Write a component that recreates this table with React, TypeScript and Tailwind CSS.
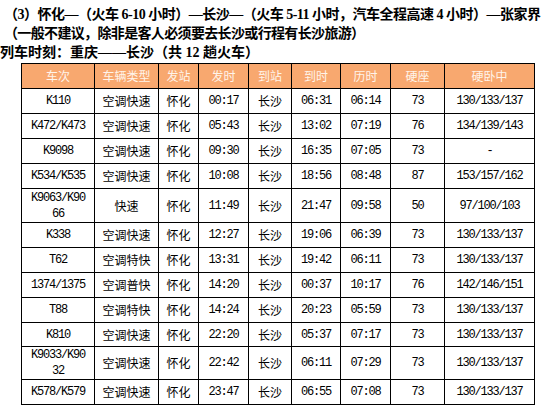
import React from "react";

type Row = {
  no: string[];
  type: string;
  from: string;
  dep: string;
  to: string;
  arr: string;
  dur: string;
  seat: string;
  sleeper: string;
  h?: string;
};

const rows: Row[] = [
  { no: ["K110"], type: "空调快速", from: "怀化", dep: "00:17", to: "长沙", arr: "06:31", dur: "06:14", seat: "73", sleeper: "130/133/137" },
  { no: ["K472/K473"], type: "空调快速", from: "怀化", dep: "05:43", to: "长沙", arr: "13:02", dur: "07:19", seat: "76", sleeper: "134/139/143" },
  { no: ["K9098"], type: "空调快速", from: "怀化", dep: "09:30", to: "长沙", arr: "16:35", dur: "07:05", seat: "73", sleeper: "-" },
  { no: ["K534/K535"], type: "空调快速", from: "怀化", dep: "10:08", to: "长沙", arr: "18:56", dur: "08:48", seat: "87", sleeper: "153/157/162" },
  { no: ["K9063/K90", "66"], type: "快速", from: "怀化", dep: "11:49", to: "长沙", arr: "21:47", dur: "09:58", seat: "50", sleeper: "97/100/103", h: "h-[34px]" },
  { no: ["K338"], type: "空调快速", from: "怀化", dep: "12:27", to: "长沙", arr: "19:06", dur: "06:39", seat: "73", sleeper: "130/133/137" },
  { no: ["T62"], type: "空调特快", from: "怀化", dep: "13:31", to: "长沙", arr: "19:42", dur: "06:11", seat: "73", sleeper: "130/133/137" },
  { no: ["1374/1375"], type: "空调普快", from: "怀化", dep: "14:20", to: "长沙", arr: "00:37", dur: "10:17", seat: "76", sleeper: "142/146/151" },
  { no: ["T88"], type: "空调特快", from: "怀化", dep: "14:24", to: "长沙", arr: "20:23", dur: "05:59", seat: "73", sleeper: "130/133/137" },
  { no: ["K810"], type: "空调快速", from: "怀化", dep: "22:20", to: "长沙", arr: "05:37", dur: "07:17", seat: "73", sleeper: "130/133/137", h: "h-[24px]" },
  { no: ["K9033/K90", "32"], type: "空调快速", from: "怀化", dep: "22:42", to: "长沙", arr: "06:11", dur: "07:29", seat: "73", sleeper: "130/133/137", h: "h-[33px]" },
  { no: ["K578/K579"], type: "空调快速", from: "怀化", dep: "23:47", to: "长沙", arr: "06:55", dur: "07:08", seat: "73", sleeper: "130/133/137" },
];

const headers = ["车次", "车辆类型", "发站", "发时", "到站", "到时", "历时", "硬座", "硬卧中"];
const widths = [73, 64, 40, 50, 43, 49, 50, 54, 90];

const mono =
  "font-['Liberation_Mono','Noto_Sans_CJK_SC',monospace] text-[12px] tracking-[-1.2px]";
const cjk = "font-['Noto_Sans_CJK_SC',sans-serif] text-[12px]";

export default function App() {
  return (
    <div className="w-[544px] h-[413px] bg-white overflow-hidden">
      <div className="pt-[5px] font-['Liberation_Serif','Noto_Sans_CJK_SC',serif] font-bold text-[14px] leading-[19px] text-black whitespace-nowrap">
        <div className="pl-[4px] tracking-[-0.5px]">
          （3）怀化—（火车 6-10 小时）—长沙—（火车 5-11 小时，汽车全程高速 4 小时）—张家界
        </div>
        <div className="pl-[4px] tracking-[-0.65px]">（一般不建议，除非是客人必须要去长沙或行程有长沙旅游）</div>
        <div className="tracking-[0px]">列车时刻：重庆——长沙（共 12 趟火车）</div>
      </div>
      <table className="ml-[21px] mt-[1px] w-[514px] table-fixed border-collapse border border-black text-black">
        <colgroup>
          {widths.map((w, i) => (
            <col key={i} style={{ width: w }} />
          ))}
        </colgroup>
        <thead>
          <tr className="h-[25px] bg-[#f8a86f]">
            {headers.map((h) => (
              <th key={h} className={`border border-black p-0 text-center font-normal text-[#fff4ea] ${cjk}`}>
                {h}
              </th>
            ))}
          </tr>
        </thead>
        <tbody>
          {rows.map((r, i) => (
            <tr key={i} className={r.h ?? "h-[25px]"}>
              <td className={`border border-black p-0 text-center leading-[16px] ${mono}`}>
                {r.no.map((n, j) => (
                  <div key={j}>{n}</div>
                ))}
              </td>
              <td className={`border border-black p-0 text-center ${cjk}`}>{r.type}</td>
              <td className={`border border-black p-0 text-center ${cjk}`}>{r.from}</td>
              <td className={`border border-black p-0 text-center ${mono}`}>{r.dep}</td>
              <td className={`border border-black p-0 text-center ${cjk}`}>{r.to}</td>
              <td className={`border border-black p-0 text-center ${mono}`}>{r.arr}</td>
              <td className={`border border-black p-0 text-center ${mono}`}>{r.dur}</td>
              <td className={`border border-black p-0 text-center ${mono}`}>{r.seat}</td>
              <td className={`border border-black p-0 text-center ${mono}`}>{r.sleeper}</td>
            </tr>
          ))}
        </tbody>
      </table>
    </div>
  );
}
